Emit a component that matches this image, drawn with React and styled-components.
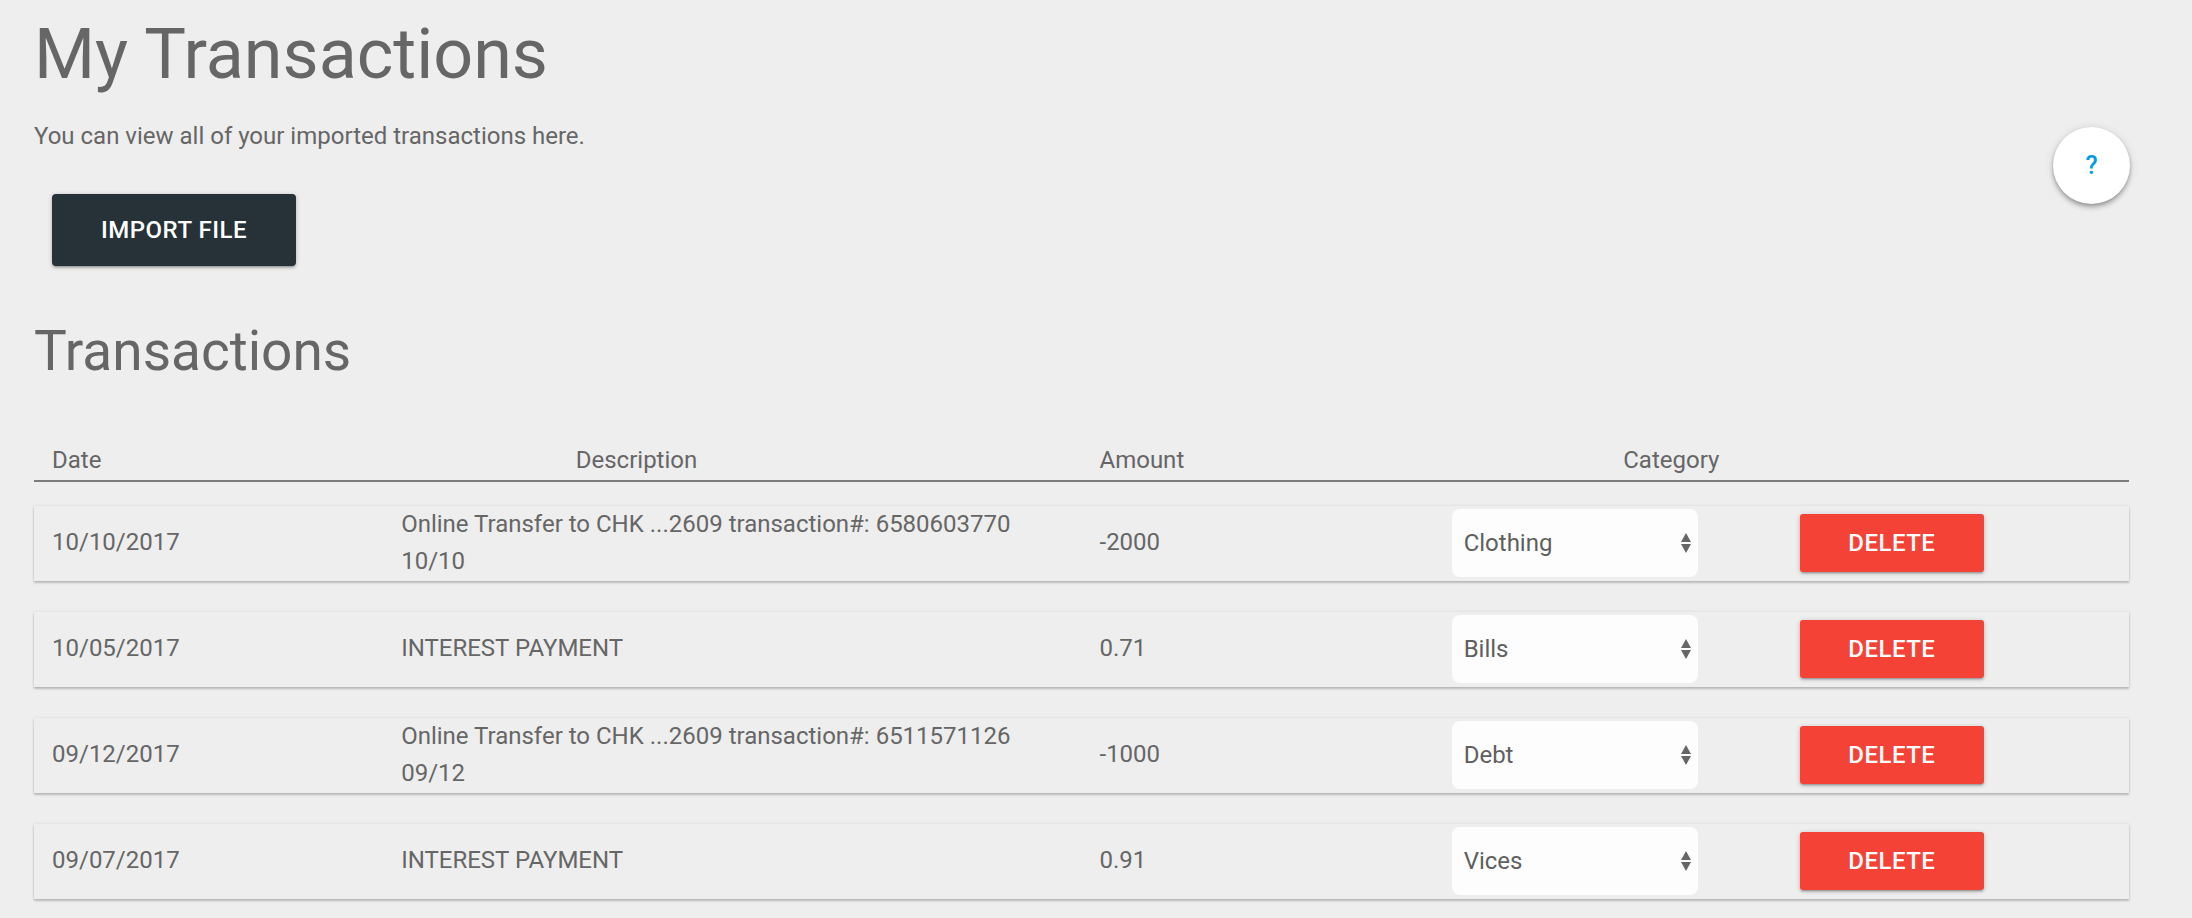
import React from 'react';
import styled, { createGlobalStyle } from 'styled-components';

const GlobalStyle = createGlobalStyle`
  body {
    margin: 0;
    background-color: #eeeeee;
    font-family: Roboto, "Liberation Sans", sans-serif;
    color: #666666;
  }
`;

const Page = styled.div`
  position: relative;
  box-sizing: border-box;
  min-height: 100vh;
  padding: 16px 63px 0 34px;
`;

const Title = styled.h1`
  margin: 0;
  font-size: 70px;
  line-height: 77px;
  font-weight: 400;
`;

const Intro = styled.p`
  margin: 25px 0 0;
  font-size: 24px;
  line-height: 36px;
`;

const ImportButton = styled.button`
  display: block;
  margin: 40px 0 0 18px;
  width: 244px;
  height: 72px;
  border: none;
  border-radius: 4px;
  background-color: #263238;
  color: #ffffff;
  font-family: inherit;
  font-size: 24px;
  font-weight: 500;
  letter-spacing: 0.5px;
  text-transform: uppercase;
  cursor: pointer;
  box-shadow: 0 2px 2px 0 rgba(0, 0, 0, 0.14), 0 3px 1px -2px rgba(0, 0, 0, 0.12), 0 1px 5px 0 rgba(0, 0, 0, 0.2);
`;

const HelpButton = styled.button`
  position: absolute;
  top: 127px;
  right: 62px;
  width: 77px;
  height: 77px;
  border: none;
  border-radius: 50%;
  background-color: #ffffff;
  color: #039be5;
  font-family: inherit;
  font-size: 25px;
  font-weight: 500;
  cursor: pointer;
  box-shadow: 0 4px 5px 0 rgba(0, 0, 0, 0.14), 0 1px 10px 0 rgba(0, 0, 0, 0.12), 0 2px 4px -1px rgba(0, 0, 0, 0.3);
`;

const SectionTitle = styled.h2`
  margin: 55px 0 0;
  font-size: 55px;
  line-height: 60.5px;
  font-weight: 400;
`;

const HeaderRow = styled.div`
  display: grid;
  grid-template-columns: repeat(12, 1fr);
  margin-top: 60px;
  padding-bottom: 2px;
  border-bottom: 2px solid #7b7b7b;
  font-size: 24px;
  line-height: 36px;
`;

const HeadCell = styled.div`
  grid-column: span 3;
  padding: 0 18px;
`;

const RowList = styled.div`
  margin-top: 24px;
`;

const Row = styled.div`
  display: grid;
  grid-template-columns: repeat(12, 1fr);
  align-items: center;
  min-height: 75px;
  margin-bottom: 31px;
  background-color: #eeeeee;
  box-shadow: 0 2px 2px 0 rgba(0, 0, 0, 0.2), 0 0 3px 0 rgba(0, 0, 0, 0.1);
`;

const Cell = styled.div`
  grid-column: span ${props => props.$span || 2};
  padding: 0 18px;
  font-size: 24px;
  line-height: 37.5px;
`;

const SelectWrap = styled.div`
  position: relative;
  width: 246px;
  margin-left: 3px;
`;

const CategorySelect = styled.select`
  display: block;
  width: 100%;
  height: 68px;
  padding: 0 12px;
  border: none;
  border-radius: 8px;
  background-color: #fdfdfd;
  color: #5f5f5f;
  font-family: inherit;
  font-size: 24px;
  appearance: none;
  -webkit-appearance: none;
  outline: none;
`;

const Arrows = styled.svg`
  position: absolute;
  top: 50%;
  right: 6px;
  transform: translateY(-50%);
  pointer-events: none;
`;

const DeleteButton = styled.button`
  display: block;
  width: 184px;
  height: 58px;
  margin-left: 2px;
  border: none;
  border-radius: 3px;
  background-color: #f44336;
  color: #ffffff;
  font-family: inherit;
  font-size: 24px;
  font-weight: 500;
  letter-spacing: 0.5px;
  text-transform: uppercase;
  cursor: pointer;
  box-shadow: 0 2px 2px 0 rgba(0, 0, 0, 0.14), 0 3px 1px -2px rgba(0, 0, 0, 0.12), 0 1px 5px 0 rgba(0, 0, 0, 0.2);
`;

const categories = ['Bills', 'Clothing', 'Debt', 'Food', 'Entertainment', 'Vices'];

const transactions = [
  { id: 1, date: '10/10/2017', description: 'Online Transfer to CHK ...2609 transaction#: 6580603770 10/10', amount: '-2000', category: 'Clothing' },
  { id: 2, date: '10/05/2017', description: 'INTEREST PAYMENT', amount: '0.71', category: 'Bills' },
  { id: 3, date: '09/12/2017', description: 'Online Transfer to CHK ...2609 transaction#: 6511571126 09/12', amount: '-1000', category: 'Debt' },
  { id: 4, date: '09/07/2017', description: 'INTEREST PAYMENT', amount: '0.91', category: 'Vices' },
];

const App = () => {
  return (
    <Page>
      <GlobalStyle />
      <Title>My Transactions</Title>
      <Intro>You can view all of your imported transactions here.</Intro>
      <ImportButton>Import File</ImportButton>
      <HelpButton>?</HelpButton>

      <SectionTitle>Transactions</SectionTitle>

      <HeaderRow>
        <HeadCell>Date</HeadCell>
        <HeadCell>Description</HeadCell>
        <HeadCell>Amount</HeadCell>
        <HeadCell>Category</HeadCell>
      </HeaderRow>

      <RowList>
        {transactions.map(t => (
          <Row key={t.id}>
            <Cell>{t.date}</Cell>
            <Cell $span={4}>{t.description}</Cell>
            <Cell>{t.amount}</Cell>
            <Cell>
              <SelectWrap>
                <CategorySelect defaultValue={t.category}>
                  {categories.map(c => (
                    <option key={c} value={c}>{c}</option>
                  ))}
                </CategorySelect>
                <Arrows width="12" height="22" viewBox="0 0 12 22">
                  <polygon points="6,1 11,10 1,10" fill="#666666" />
                  <polygon points="1,12 11,12 6,21" fill="#666666" />
                </Arrows>
              </SelectWrap>
            </Cell>
            <Cell>
              <DeleteButton>Delete</DeleteButton>
            </Cell>
          </Row>
        ))}
      </RowList>
    </Page>
  );
};

export default App;
